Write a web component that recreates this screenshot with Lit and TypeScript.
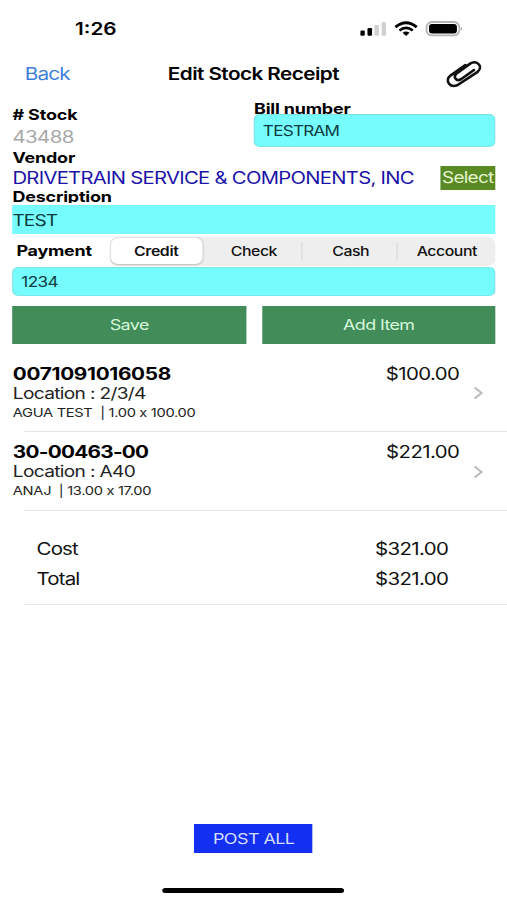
import { LitElement, html, css, svg } from "lit";
import { customElement, property, state } from "lit/decorators.js";
import { classMap } from "lit/directives/class-map.js";

interface Item {
  code: string;
  location: string;
  detail: string;
  amount: string;
}

const ITEMS: Item[] = [
  { code: "0071091016058", location: "2/3/4", detail: "AGUA TEST  | 1.00 x 100.00", amount: "$100.00" },
  { code: "30-00463-00", location: "A40", detail: "ANAJ  | 13.00 x 17.00", amount: "$221.00" },
];

@customElement("status-bar")
class StatusBar extends LitElement {
  static styles = css`
    :host { display: flex; align-items: center; height: 58px; box-sizing: border-box; padding: 0 35.5px 0 61.5px; }
    .time { font-size: 17px; font-weight: 600; flex: 1; }
    .icons { display: block; width: 85px; height: 16px; }
  `;
  render() {
    return html`
      <span class="time">1:26</span>
      <svg class="icons" viewBox="0 0 104 16" preserveAspectRatio="none">
        <rect x="0.5" y="9.5" width="4.4" height="5.2" rx="1.2" />
        <rect x="7.6" y="7" width="4.6" height="7.7" rx="1.2" />
        <rect x="14.6" y="4" width="4.6" height="10.7" rx="1.2" fill="#d0d0d0" />
        <rect x="21.8" y="1.3" width="4.4" height="13.4" rx="1.2" fill="#d0d0d0" />
        ${svg`
          <path d="M35.6 6.1Q46.3 -2.6 57 6.1" fill="none" stroke="#000" stroke-width="2.8" />
          <path d="M39.6 9.6Q46.3 4.1 53 9.6" fill="none" stroke="#000" stroke-width="2.6" />
          <path d="M42.8 11.8Q46.3 9.1 49.8 11.8L46.3 15Z" />
        `}
        <rect x="66.8" y="1" width="33" height="13.4" rx="5.5" fill="#fff" stroke="#b4b4b4" stroke-width="1.8" />
        <rect x="69.3" y="3" width="28" height="9.4" rx="3" />
        <path d="M101.3 5.7Q103.4 7.7 101.3 9.7Z" fill="#999" />
      </svg>
    `;
  }
}

@customElement("nav-bar")
class NavBar extends LitElement {
  static styles = css`
    :host { display: grid; grid-template-columns: 1fr auto 1fr; align-items: center; height: 32px; padding: 0 20.5px 0 20.3px; font-size: 17px; }
    .back { color: #3f7fdc; letter-spacing: -0.7px; }
    .title { font-weight: 600; letter-spacing: -0.47px; }
    .clip { display: block; justify-self: end; width: 30px; height: 28px; }
  `;
  render() {
    return html`
      <span class="back">Back</span>
      <span class="title">Edit Stock Receipt</span>
      <svg class="clip" viewBox="0 0 36 28" preserveAspectRatio="none">
        <path
          d="M19.5 4.6L4.8 15.2C-0.8 19.8 4 28.2 12 24.6L31.6 11.4C37.2 6.6 31.8 -0.6 24.6 3L11 13C7 16.8 10.8 21.6 15.2 18.8L28 9.6"
          transform="translate(0.2 0.4)" fill="none" stroke="#111" stroke-width="2.6" stroke-linecap="round" stroke-linejoin="round" />
      </svg>
    `;
  }
}

@customElement("payment-picker")
class PaymentPicker extends LitElement {
  static styles = css`
    :host { display: flex; align-items: center; height: 29px; }
    .label { width: 79.5px; padding-left: 3.3px; box-sizing: border-box; font-size: 14.7px; font-weight: 700; letter-spacing: -0.2px; }
    .track { flex: 1; display: grid; grid-template-columns: repeat(4, 1fr); height: 29px; box-sizing: border-box; padding: 1.5px 0 1.5px 1.2px; border-radius: 7px; background: #eeeeee; }
    .seg { display: flex; align-items: center; justify-content: center; font-size: 13px; font-weight: 500; letter-spacing: -0.37px; color: #111; padding-right: 2px; }
    .on { background: #fff; border-radius: 6px; font-weight: 600; margin-right: 3.5px; padding-right: 1px; letter-spacing: -0.32px; box-shadow: 0 0.5px 2px rgba(0, 0, 0, 0.22); }
    .split { border-left: 1px solid #dadada; height: 18px; align-self: center; box-sizing: border-box; margin-left: -2px; padding-right: 0; }
  `;
  @state() private selected = "Credit";
  render() {
    return html`
      <span class="label">Payment</span>
      <div class="track">
        ${["Credit", "Check", "Cash", "Account"].map(
          (name, i) => html`<div
            class=${classMap({ seg: true, on: name === this.selected, split: i > 1 })}
            @click=${() => (this.selected = name)}
          >${name}</div>`
        )}
      </div>
    `;
  }
}

@customElement("item-row")
class ItemRow extends LitElement {
  static styles = css`
    :host { display: block; height: 78.5px; font-feature-settings: "calt" 0; }
    .row { display: flex; height: 77.5px; box-sizing: border-box; padding: 10px 20px 0 10.5px; }
    .info { flex: 1; }
    .code { font-size: 17px; line-height: 20px; font-weight: 700; letter-spacing: -0.25px; }
    .dashed { letter-spacing: -0.6px; }
    .loc { font-size: 15.7px; line-height: 20px; letter-spacing: -0.56px; color: #222; }
    .detail { font-size: 12px; line-height: 18.5px; letter-spacing: -0.25px; color: #222; white-space: pre; }
    .amount { font-size: 16.7px; line-height: 20px; letter-spacing: -0.46px; color: #111; }
    .chev { width: 8px; height: 14px; margin: 22.5px 0 0 11px; }
    .rule { height: 1px; margin-left: 19.7px; background: #e4e4e4; }
  `;
  @property({ attribute: false }) item!: Item;
  render() {
    return html`
      <div class="row">
        <div class="info">
          <div class=${classMap({ code: true, dashed: this.item.code.includes("-") })}>${this.item.code}</div>
          <div class="loc">Location : ${this.item.location}</div>
          <div class="detail">${this.item.detail}</div>
        </div>
        <span class="amount">${this.item.amount}</span>
        <svg class="chev" viewBox="0 0 8 14">
          <path d="M1 1.5L6.8 7L1 12.5" fill="none" stroke="#bcbcbc" stroke-width="1.8" />
        </svg>
      </div>
      <div class="rule"></div>
    `;
  }
}

@customElement("app-root")
class AppRoot extends LitElement {
  static styles = css`
    :host { display: block; width: 100%; height: 900px; overflow: hidden; background: #fff; color: #000; font-family: Inter, "Liberation Sans", sans-serif; }
    .screen { width: calc(100% / 1.22); height: 900px; transform: scaleX(1.22); transform-origin: 0 0; display: flex; flex-direction: column; }
    .form { padding: 0 9.4px 0 10.2px; }
    .top { display: grid; grid-template-columns: 1fr 198px; height: 59px; }
    .caption { font-size: 14.7px; font-weight: 700; letter-spacing: -0.15px; }
    .stock { margin-top: 14px; line-height: 22px; letter-spacing: -0.1px; }
    .number { font-size: 16.8px; line-height: 23px; color: #a9a9a9; letter-spacing: -0.5px; }
    .bill { margin-top: 13.6px; line-height: 11px; height: 10.4px; }
    .field { display: flex; align-items: center; background: #76fcfd; color: #0b3b40; font-size: 14px; letter-spacing: -0.45px; height: 29px; box-sizing: border-box; }
    .round { border-radius: 5px; border: 1px solid #7be6e8; padding-left: 6.3px; }
    .tall { height: 33px; letter-spacing: -0.6px; }
    .plain { font-size: 15.6px; letter-spacing: -0.7px; margin-bottom: 2.5px; padding: 1px 0 0; }
    .vendor-label { line-height: 18px; height: 17px; }
    .vendor { display: flex; align-items: center; justify-content: space-between; height: 23.5px; }
    .vendor-name { font-size: 16.6px; letter-spacing: -0.58px; color: #1b12a8; white-space: nowrap; }
    .select { width: 45.5px; height: 23.5px; line-height: 24px; text-align: center; background: #5b8a25; color: #e6f5cf; font-size: 15.5px; letter-spacing: -0.6px; }
    .desc { height: 13.5px; line-height: 15.8px; overflow: hidden; margin-bottom: 2px; }
    .method { margin-top: 1.5px; }
    .actions { display: grid; grid-template-columns: 1fr 1fr; gap: 13px; margin-top: 9.5px; }
    .action { height: 38.5px; line-height: 39px; background: #418c58; color: #d5f7dc; font-size: 14.7px; letter-spacing: -0.5px; text-align: center; }
    .items { margin-top: 9.5px; }
    .totals { padding: 24.6px 48px 10.4px 30px; font-size: 16.8px; color: #111; letter-spacing: -0.72px; }
    .total { display: flex; justify-content: space-between; height: 29.5px; line-height: 29.5px; }
    .sum { letter-spacing: -0.5px; }
    .rule { height: 1px; margin-left: 19.7px; background: #e9e9e9; }
    .footer { margin-top: auto; display: flex; flex-direction: column; align-items: center; padding: 0 0 7.5px 0.4px; }
    .post { width: 97px; height: 29px; line-height: 30.6px; margin-bottom: 34.5px; background: #1330f2; color: #d3ddff; font-size: 14.7px; letter-spacing: -0.45px; text-align: center; }
    .home { width: 149px; height: 5px; border-radius: 3px; background: #000; }
  `;
  render() {
    return html`
      <div class="screen">
        <status-bar></status-bar>
        <nav-bar></nav-bar>
        <div class="form">
          <div class="top">
            <div>
              <div class="caption stock"># Stock</div>
              <div class="number">43488</div>
            </div>
            <div>
              <div class="caption bill">Bill number</div>
              <div class="field round tall">TESTRAM</div>
            </div>
          </div>
          <div class="caption vendor-label">Vendor</div>
          <div class="vendor">
            <span class="vendor-name">DRIVETRAIN SERVICE &amp; COMPONENTS, INC</span>
            <div class="select">Select</div>
          </div>
          <div class="caption desc">Description</div>
          <div class="field plain">TEST</div>
          <payment-picker></payment-picker>
          <div class="field round method">1234</div>
          <div class="actions">
            <div class="action">Save</div>
            <div class="action">Add Item</div>
          </div>
        </div>
        <div class="items">${ITEMS.map((item) => html`<item-row .item=${item}></item-row>`)}</div>
        <div class="totals">
          <div class="total"><span>Cost</span><span class="sum">$321.00</span></div>
          <div class="total"><span>Total</span><span class="sum">$321.00</span></div>
        </div>
        <div class="rule"></div>
        <div class="footer">
          <div class="post">POST ALL</div>
          <div class="home"></div>
        </div>
      </div>
    `;
  }
}
